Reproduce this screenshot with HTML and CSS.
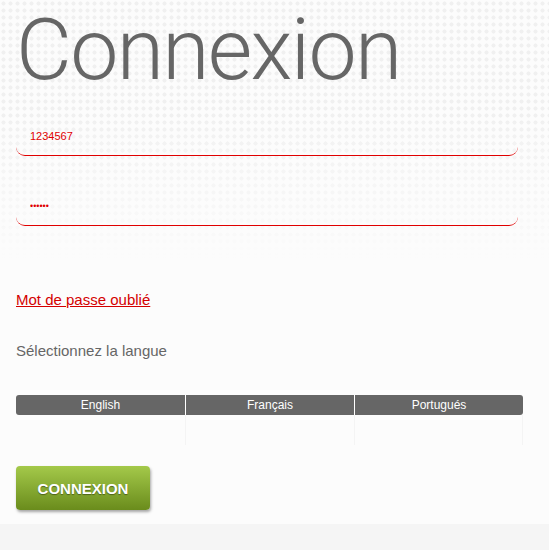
FILE: index.html
```html
<!DOCTYPE html>
<html>
<head>
  <title>Connexion</title>
  <link rel="stylesheet" href="styles.css">
</head>
<body>
  <div class="panel">
    <h1 class="title">Connexion</h1>

    <form class="login">
      <input class="field" type="text" value="1234567">
      <input class="field pass" type="password" value="123456">

      <a class="forgot" href="#">Mot de passe oublié</a>

      <p class="lang-label">Sélectionnez la langue</p>

      <table class="langs">
        <tr class="lang-head">
          <td>English</td>
          <td>Français</td>
          <td>Portugués</td>
        </tr>
        <tr class="lang-body">
          <td></td>
          <td></td>
          <td></td>
        </tr>
      </table>

      <button class="submit" type="button">CONNEXION</button>
    </form>
  </div>
</body>
</html>
```

FILE: styles.css
```css
html, body {
  margin: 0;
  background: #f5f5f5;
  font-family: "Liberation Sans", Arial, sans-serif;
}
.panel {
  position: relative;
  width: 560px;
  height: 524px;
  padding: 0 0 0 16px;
  box-sizing: border-box;
  background: #fcfcfc;
  border-bottom-right-radius: 12px;
  overflow: hidden;
}
/* dotted texture fading out downwards */
.panel::before {
  content: "";
  position: absolute;
  left: 0; top: 0; right: 0;
  height: 260px;
  background-image: radial-gradient(circle, #f0f0f0 1.8px, transparent 2.3px);
  background-size: 7px 7px;
  -webkit-mask-image: linear-gradient(#000 45%, transparent);
  mask-image: linear-gradient(#000 45%, transparent);
}
.title, .login { position: relative; }
.title {
  margin: 0;
  padding-top: 0;
  font-family: Roboto, sans-serif;
  font-weight: 300;
  font-size: 86px;
  line-height: 100px;
  color: #666;
  letter-spacing: -1.7px;
}
.login {
  display: flex;
  flex-direction: column;
  align-items: flex-start;
  padding-top: 26px;
}
.field {
  width: 502px;
  height: 30px;
  margin: 0 0 40px;
  padding: 0 14px 9px;
  box-sizing: border-box;
  border: none;
  border-bottom: 1px solid #e00000;
  border-radius: 0 0 9px 9px;
  background: transparent;
  color: #e00000;
  font-family: "Liberation Sans", Arial, sans-serif;
  font-size: 11px;
  outline: none;
}
.field.pass { font-size: 9px; }
.forgot {
  margin-top: 25px;
  font-size: 15px;
  color: #d40000;
  text-decoration: underline;
}
.lang-label {
  margin: 34px 0 0;
  font-size: 15px;
  color: #666;
}
.langs {
  margin-top: 36px;
  width: 507px;
  border-collapse: separate;
  border-spacing: 0;
  table-layout: fixed;
}
.lang-head td {
  height: 20px;
  padding: 0;
  background: #666;
  color: #fff;
  font-size: 12px;
  text-align: center;
  border-left: 1px solid #fff;
}
.lang-head td:first-child { border-left: none; border-radius: 3px 0 0 3px; }
.lang-head td:last-child { border-radius: 0 3px 3px 0; }
.lang-body td {
  height: 30px;
  padding: 0;
  border-left: 1px solid #f4f4f4;
}
.lang-body td:first-child { border-left: none; }
.lang-body td:last-child { border-right: 1px solid #f4f4f4; }
.submit {
  margin-top: 21px;
  width: 134px;
  height: 44px;
  border: none;
  border-radius: 4px;
  background: linear-gradient(#a4c94a, #6a8c1c);
  box-shadow: 1px 2px 3px rgba(0,0,0,0.35);
  color: #fff;
  font-family: "Liberation Sans", Arial, sans-serif;
  font-weight: bold;
  font-size: 15px;
  text-shadow: 0 1px 1px rgba(0,0,0,0.4);
}
```
